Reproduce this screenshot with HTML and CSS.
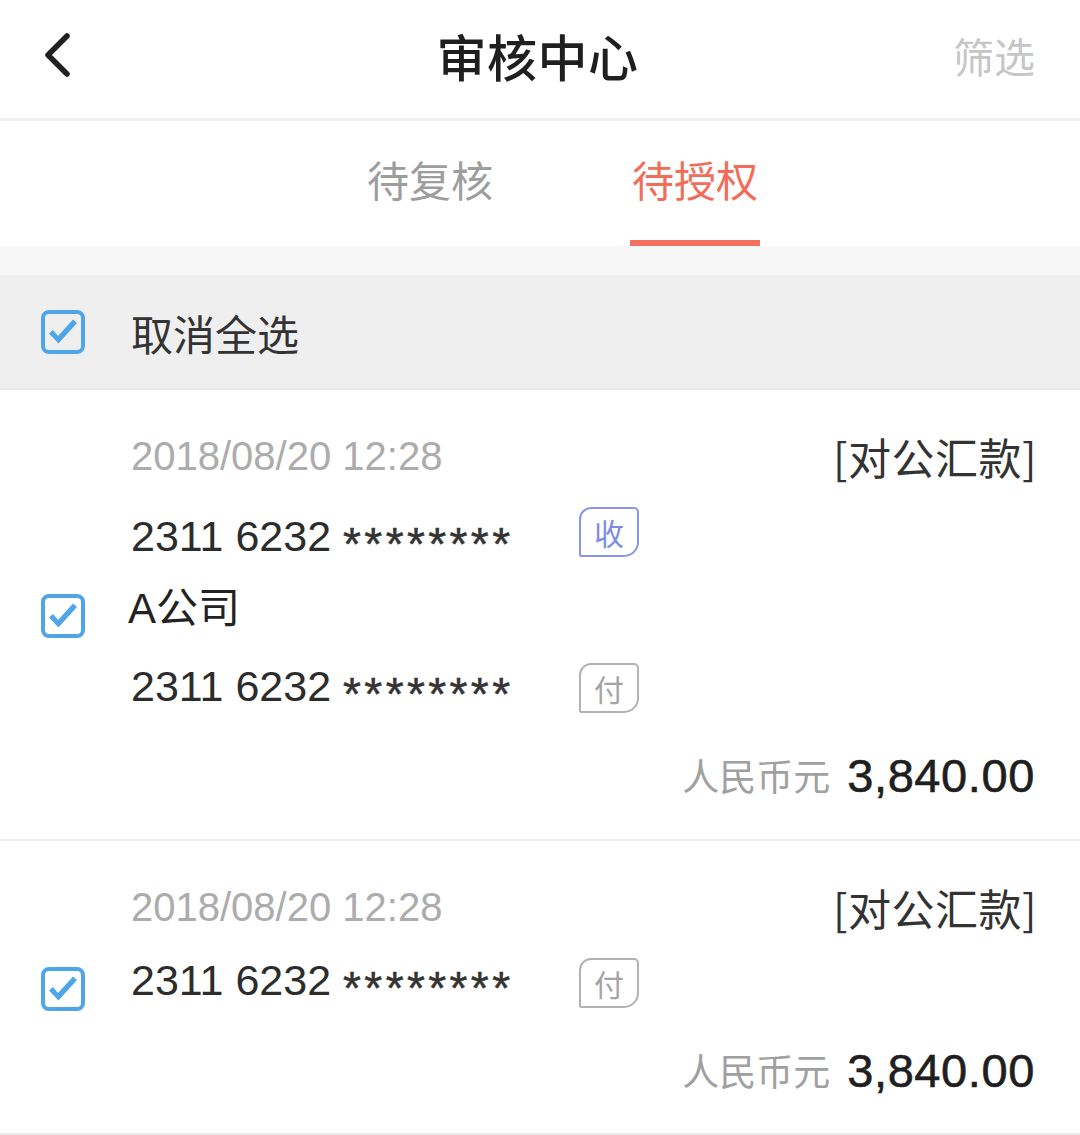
FILE: index.html
```html
<!DOCTYPE html>
<html lang="zh-CN">
<head>
<meta charset="utf-8">
<title>审核中心</title>
<link rel="stylesheet" href="styles.css">
</head>
<body>
<div class="page">
  <header class="topbar">
    <div class="topbar-left">
      <svg class="back" width="34" height="46" viewBox="0 0 34 46"><path d="M27 4 L8 23 L27 42" fill="none" stroke="#1f1f1f" stroke-width="5.5" stroke-linecap="round" stroke-linejoin="round"/></svg>
    </div>
    <h1 class="title">审核中心</h1>
    <div class="topbar-right"><span class="filter">筛选</span></div>
  </header>

  <nav class="tabs">
    <div class="tab"><span class="tab-label">待复核</span><span class="tab-line"></span></div>
    <div class="tab active"><span class="tab-label">待授权</span><span class="tab-line"></span></div>
  </nav>

  <div class="band"></div>

  <div class="select-all">
    <svg class="check" width="44" height="44" viewBox="0 0 44 44"><rect x="2" y="2" width="40" height="40" rx="6" fill="none" stroke="#4fa5ea" stroke-width="4"/><path d="M8 23.5 L12 20 L17 26 L32 9.5 L36 13 L17.5 33.5 Z" fill="#4fa5ea"/></svg>
    <span class="select-label">取消全选</span>
  </div>

  <section class="card">
    <div class="card-check">
      <svg class="check" width="44" height="44" viewBox="0 0 44 44"><rect x="2" y="2" width="40" height="40" rx="6" fill="none" stroke="#4fa5ea" stroke-width="4"/><path d="M8 23.5 L12 20 L17 26 L32 9.5 L36 13 L17.5 33.5 Z" fill="#4fa5ea"/></svg>
    </div>
    <div class="card-body">
      <div class="row row-date">
        <span class="date">2018/08/20 12:28</span>
        <span class="kind">[对公汇款]</span>
      </div>
      <div class="row row-acct acct-1">
        <span class="acct">2311 6232 <span class="stars">********</span></span>
        <span class="badge badge-in">收</span>
      </div>
      <div class="row row-name">
        <span class="name">A公司</span>
      </div>
      <div class="row row-acct acct-2">
        <span class="acct">2311 6232 <span class="stars">********</span></span>
        <span class="badge badge-out">付</span>
      </div>
      <div class="row row-amount amount-1">
        <span class="currency">人民币元</span>
        <span class="amount">3,840.00</span>
      </div>
    </div>
  </section>

  <section class="card card-2">
    <div class="card-check">
      <svg class="check" width="44" height="44" viewBox="0 0 44 44"><rect x="2" y="2" width="40" height="40" rx="6" fill="none" stroke="#4fa5ea" stroke-width="4"/><path d="M8 23.5 L12 20 L17 26 L32 9.5 L36 13 L17.5 33.5 Z" fill="#4fa5ea"/></svg>
    </div>
    <div class="card-body">
      <div class="row row-date">
        <span class="date">2018/08/20 12:28</span>
        <span class="kind">[对公汇款]</span>
      </div>
      <div class="row row-acct acct-single">
        <span class="acct">2311 6232 <span class="stars">********</span></span>
        <span class="badge badge-out">付</span>
      </div>
      <div class="row row-amount amount-2">
        <span class="currency">人民币元</span>
        <span class="amount">3,840.00</span>
      </div>
    </div>
  </section>
</div>
</body>
</html>
```

FILE: styles.css
```css
* { box-sizing: border-box; }
html, body { margin: 0; padding: 0; background: #ffffff; }
body {
  font-family: "Liberation Sans", "Noto Sans CJK SC", sans-serif;
  color: #333;
}
.page { width: 1080px; }

/* header */
.topbar {
  height: 121px;
  padding: 0 45px 8px 40px;
  display: grid;
  grid-template-columns: 1fr auto 1fr;
  align-items: center;
  border-bottom: 3px solid #efefef;
}
.topbar-left { display: flex; align-items: center; }
.back { display: block; }
.title {
  margin: 0;
  font-family: "Noto Sans CJK SC", sans-serif;
  font-size: 50px;
  font-weight: 500;
  color: #1f1f1f;
  line-height: 60px;
  letter-spacing: 0.5px;
}
.topbar-right { display: flex; justify-content: flex-end; }
.filter {
  font-family: "Noto Sans CJK SC", sans-serif;
  font-size: 41px;
  color: #c6c6c6;
  line-height: 60px;
}

/* tabs */
.tabs {
  height: 125px;
  display: flex;
  justify-content: center;
  gap: 135px;
  padding: 28px 0 0 45px;
}
.tab {
  width: 130px;
  display: flex;
  flex-direction: column;
  align-items: center;
}
.tab-label {
  font-family: "Noto Sans CJK SC", sans-serif;
  font-size: 42px;
  line-height: 60px;
  color: #9d9d9d;
}
.tab-line {
  display: block;
  width: 130px;
  height: 6px;
  margin-top: 31px;
  background: transparent;
}
.tab.active .tab-label { color: #f26c5a; }
.tab.active .tab-line { background: #f2705e; }

.band { height: 29px; background: #f7f7f7; }

/* select all */
.select-all {
  height: 115px;
  background: #efefef;
  display: flex;
  align-items: center;
  gap: 46px;
  padding-left: 41px;
  border-bottom: 2px solid #e7e7e7;
}
.check { display: block; flex: none; }
.select-label {
  font-family: "Noto Sans CJK SC", sans-serif;
  font-size: 42px;
  line-height: 60px;
  color: #333;
  padding-top: 2px;
}

/* cards */
.card {
  display: flex;
  border-bottom: 2px solid #ececec;
  padding: 36px 0 34px;
}
.card-2 { padding: 36px 0 33px; }
.card-check {
  width: 131px;
  padding-left: 41px;
  display: flex;
  align-items: center;
}
.card-body { flex: 1; padding-right: 43px; }
.row { height: 60px; display: flex; align-items: center; }
.row-date { justify-content: space-between; }
.date { font-size: 40px; color: #acacac; }
.kind {
  font-family: "Noto Sans CJK SC", sans-serif;
  font-size: 43px;
  letter-spacing: 0.5px;
  color: #333;
}
.row-acct { display: grid; grid-template-columns: 448px 60px; align-items: center; }
.acct-1 { margin-top: 27px; }
.acct-2 { margin-top: 29px; }
.acct-single { margin-top: 20px; }
.acct {
  font-size: 43px;
  line-height: 50px;
  height: 50px;
  margin-top: -14px;
  color: #2c2c2c;
  white-space: nowrap;
}
.stars {
  font-size: 46px;
  line-height: 1;
  letter-spacing: 3.4px;
  vertical-align: -0.2em;
  color: #333;
  -webkit-text-stroke: 0.5px #333;
}
.badge {
  width: 60px;
  height: 50px;
  display: flex;
  align-items: center;
  justify-content: center;
  font-family: "Noto Sans CJK SC", sans-serif;
  font-size: 30px;
  border: 2px solid;
  border-radius: 12px 5px 15px 2px;
}
.acct-1 .badge { margin-top: -22px; }
.acct-2 .badge { margin-top: -10px; }
.acct-single .badge { margin-top: -9px; }
.badge-in { color: #7b8ce6; border-color: #8796ec; }
.badge-out { color: #a4a4a4; border-color: #b2b2b2; }
.row-name { margin-top: 1px; }
.name {
  font-size: 42px;
  color: #222;
  margin-left: -3px;
}
.row-amount { justify-content: flex-end; gap: 17px; padding-right: 2px; }
.amount-1 { margin-top: 22px; }
.amount-2 { margin-top: 23px; }
.currency {
  font-family: "Noto Sans CJK SC", sans-serif;
  font-size: 37px;
  color: #a0a0a0;
}
.amount {
  font-size: 47px;
  color: #1f1f1f;
  letter-spacing: 0.6px;
  -webkit-text-stroke: 0.6px #1f1f1f;
}
```
